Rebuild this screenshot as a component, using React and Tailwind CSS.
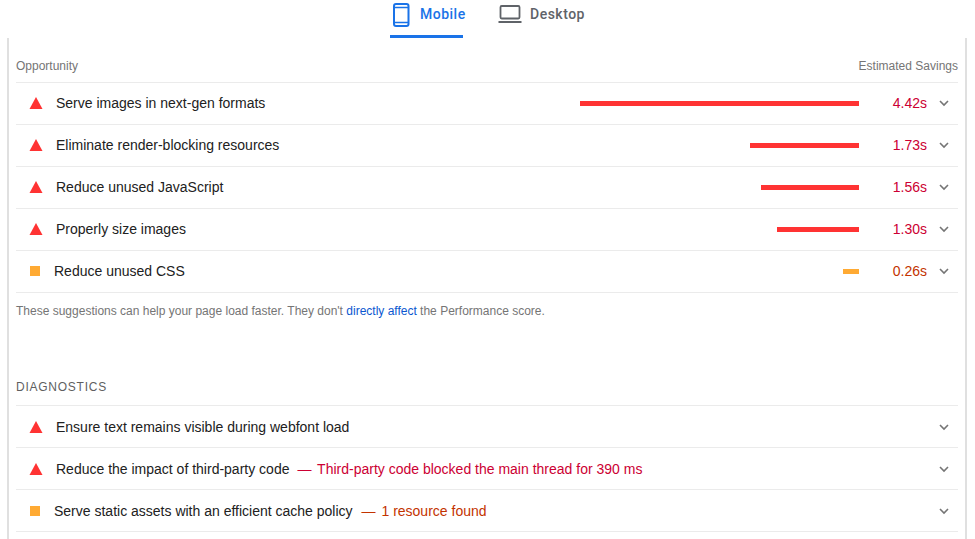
import React from "react";

const Tri = () => (
  <svg width="12" height="12" viewBox="0 0 12 12" className="block shrink-0 overflow-visible -mt-px"><path d="M6 0 L12.5 12 L-0.5 12 Z" fill="#ff3333" /></svg>
);
const Sq = () => <div className="w-[10px] h-[10px] bg-[#ffaa33] shrink-0 -mt-px" />;
const Chevron = () => (
  <svg width="10" height="7" viewBox="0 0 10 7" className="block shrink-0"><path d="M1 1 L5 5 L9 1" fill="none" stroke="#757575" strokeWidth="1.6" /></svg>
);

const Phone = () => (
  <svg width="18" height="24" viewBox="0 0 18 24" className="block"><rect x="1" y="1" width="14.5" height="22" rx="2" fill="none" stroke="#1a73e8" strokeWidth="2" /><path d="M1 4.5H15.5M1 19.5H15.5" stroke="#1a73e8" strokeWidth="1.6" /></svg>
);
const Laptop = () => (
  <svg width="24" height="20" viewBox="0 0 24 20" className="block"><rect x="2.5" y="2" width="19" height="12.5" rx="1.2" fill="none" stroke="#5f6368" strokeWidth="1.8" /><rect x="0.5" y="17" width="23" height="2" fill="#5f6368" /></svg>
);

const Row = ({ bad, low, title, note, bar, value }) => (
  <div className={low ? "h-[42px] pt-[2px] border-b border-[#ebebeb] flex items-center" : "h-[42px] border-b border-[#ebebeb] flex items-center"}>
    <div className={bad ? "w-[40px] pl-[14px]" : "w-[38px] pl-[14px]"}>{bad ? <Tri /> : <Sq />}</div>
    <div className="text-[14px] text-[#212121] whitespace-nowrap">
      {title}
      {note && (
        <span className={bad ? "ml-[8px] text-[#cc0033]" : "ml-[9px] text-[#c33300]"}>
          <span className="mr-[2px]">—</span> {note}
        </span>
      )}
    </div>
    <div className="flex-1 flex justify-end">
      {bar && <div className={bad ? "h-[5px] bg-[#ff3333]" : "h-[5px] bg-[#ffaa33]"} style={{ width: bar }} />}
    </div>
    {value && <div className={bad ? "w-[68px] text-right text-[14px] text-[#cc0033]" : "w-[68px] text-right text-[14px] text-[#c33300]"}>{value}</div>}
    <div className="w-[31px] flex justify-end pr-[9px]"><Chevron /></div>
  </div>
);

export default function App() {
  return (
    <div className="w-[975px] h-[539px] overflow-hidden bg-white font-['Liberation_Sans',Arial,sans-serif]">
      <div className="h-[38px] flex font-['Roboto',sans-serif] font-medium text-[14px] tracking-[0.5px]">
        <div className="ml-[390px] w-[73px] shrink-0 h-[38px] border-b-[3px] border-[#1a73e8] flex items-start pt-[3px] text-[#1a73e8]">
          <div className="ml-[3px] w-[27px] shrink-0"><Phone /></div>
          <span className="leading-[22px]">Mobile</span>
        </div>
        <div className="ml-[35px] flex items-start pt-[4px] text-[#5f6368]">
          <div className="w-[32px] shrink-0"><Laptop /></div>
          <span className="leading-[21px]">Desktop</span>
        </div>
      </div>
      <div className="ml-[7px] w-[960px] h-[501px] border-x-2 border-[#e0e0e0] pl-[7px] pr-[7px]">
        <div className="h-[45px] border-b border-[#ebebeb] flex justify-between items-center pt-[11px] text-[12px] text-[#757575]">
          <span>Opportunity</span>
          <span>Estimated Savings</span>
        </div>
        <Row bad title="Serve images in next-gen formats" bar={279} value="4.42s" />
        <Row bad title="Eliminate render-blocking resources" bar={109} value="1.73s" />
        <Row bad title="Reduce unused JavaScript" bar={98} value="1.56s" />
        <Row bad title="Properly size images" bar={82} value="1.30s" />
        <Row title="Reduce unused CSS" bar={16} value="0.26s" />
        <div className="mt-[11px] text-[12px] leading-[14px] text-[#757575]">
          These suggestions can help your page load faster. They don't <span className="text-[#0b57d0]">directly affect</span> the Performance score.
        </div>
        <div className="mt-[63px] h-[25px] border-b border-[#ebebeb] text-[12px] leading-[12px] tracking-[0.75px] text-[#5f5f5f]">DIAGNOSTICS</div>
        <Row bad low title="Ensure text remains visible during webfont load" />
        <Row bad low title="Reduce the impact of third-party code" note="Third-party code blocked the main thread for 390 ms" />
        <Row low title="Serve static assets with an efficient cache policy" note="1 resource found" />
      </div>
    </div>
  );
}
